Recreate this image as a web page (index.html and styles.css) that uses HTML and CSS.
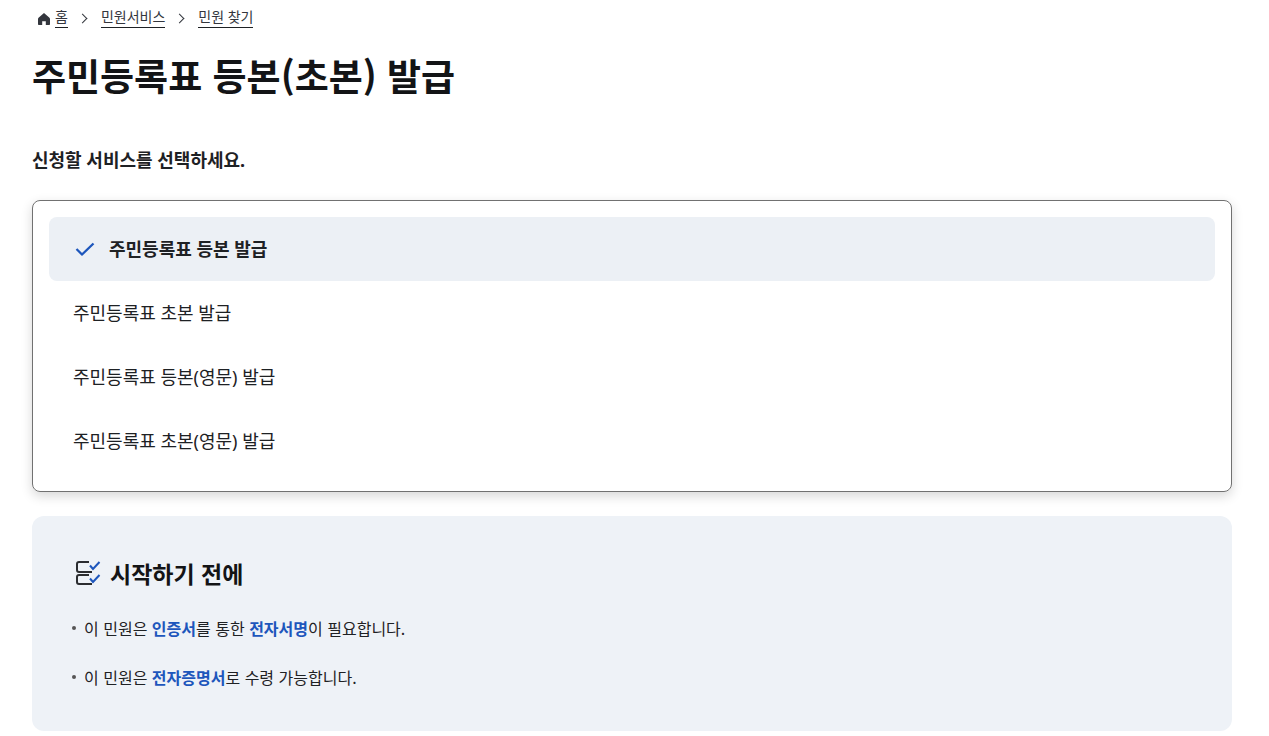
FILE: index.html
```
<!DOCTYPE html>
<html lang="ko">
<head>
	<meta charset="utf-8">
	<meta name="viewport" content="width=device-width, initial-scale=1">
	<title>주민등록표 등본(초본) 발급</title>

	<link rel="stylesheet" href="styles.css">
</head>
<body>

	<main class="container">
		<nav class="breadcrumb" aria-label="현재 위치">
			<svg class="home-icon" viewBox="0 0 14 14" aria-hidden="true">
				<path d="M7 1 L12.2 5.5 Q13 6.2 13 7 V12.2 Q13 13 12.2 13 H8.8 V9.2 H5.2 V13 H1.8 Q1 13 1 12.2 V7 Q1 6.2 1.8 5.5 Z"/>
			</svg>
			<ol>
				<li><a href="#">홈</a></li>
				<li><a href="#">민원서비스</a></li>
				<li><a href="#">민원 찾기</a></li>
			</ol>
		</nav>

		<h1>주민등록표 등본(초본) 발급</h1>

		<h2 class="guide">신청할 서비스를 선택하세요.</h2>

		<ul class="service-list">
			<li>
				<button type="button" class="active" aria-pressed="true">
					<svg class="check-icon" viewBox="0 0 24 24" aria-hidden="true"><path d="M3.500 13 L9 18.500 L20.500 7.500"/></svg>
					주민등록표 등본 발급
				</button>
			</li>
			<li><button type="button">주민등록표 초본 발급</button></li>
			<li><button type="button">주민등록표 등본(영문) 발급</button></li>
			<li><button type="button">주민등록표 초본(영문) 발급</button></li>
		</ul>

		<section class="before">
			<h2>
				<svg class="list-icon" viewBox="0 0 26 26" aria-hidden="true">
					<path class="dark" d="M15 2 H5 Q3 2 3 4 V10 Q3 12 5 12 H18"/>
					<path class="dark" d="M15 15 H5 Q3 15 3 17 V22 Q3 24 5 24 H18"/>
					<path class="blue" d="M16 5.500 L19 9 L25.500 2"/>
					<path class="blue" d="M16 18.500 L19 22 L25.500 15"/>
				</svg>
				시작하기 전에
			</h2>
			<ul>
				<li>이 민원은 <strong>인증서</strong>를 통한 <strong>전자서명</strong>이 필요합니다.</li>
				<li>이 민원은 <strong>전자증명서</strong>로 수령 가능합니다.</li>
			</ul>
		</section>
	</main>

</body>
</html>
```
FILE: styles.css
```
* {
	box-sizing: border-box;
}

body {
	margin: 0;
	font-family: "Noto Sans", "Noto Sans CJK KR", sans-serif;
	color: #1e2124;
	background: #fff;
}

h1, h2, ul, ol {
	margin: 0;
	padding: 0;
}

ul, ol {
	list-style: none;
}

.container {
	padding: 7px 37px 5px 32px;
}

/* breadcrumb */
.breadcrumb {
	display: flex;
	align-items: center;
	gap: 4px;
	padding-left: 5px;
	font-size: 14px;
	line-height: 20px;
}

.breadcrumb ol {
	display: flex;
}

.breadcrumb li {
	display: flex;
	align-items: center;
}

.breadcrumb li + li::before {
	content: "";
	width: 6px;
	height: 6px;
	margin: 2px 15px 0 11px;
	border-top: 1px solid #33363d;
	border-right: 1px solid #33363d;
	transform: rotate(45deg);
}

.breadcrumb a {
	color: #33363d;
	text-decoration: none;
	border-bottom: 1px solid #1e2124;
}

.home-icon {
	width: 14px;
	height: 14px;
	margin-top: 2px;
	fill: #33363d;
}

h1 {
	margin-top: 19px;
	font-family: "Noto Sans CJK KR", sans-serif;
	font-size: 37px;
	line-height: 56px;
	color: #131416;
}

.guide {
	margin-top: 43px;
	font-size: 18px;
	line-height: 28px;
}

/* service select */
.service-list {
	margin-top: 26px;
	padding: 16px 16px 18px;
	border: 1px solid #717171;
	border-radius: 8px;
	box-shadow: 0 4px 12px rgba(0, 0, 0, .16);
}

.service-list button {
	display: flex;
	align-items: center;
	gap: 12px;
	width: 100%;
	height: 64px;
	padding: 0 24px 2px;
	border: 0;
	border-radius: 8px;
	background: none;
	font: inherit;
	font-size: 18px;
	color: inherit;
	text-align: left;
	cursor: pointer;
}

.service-list .active {
	background: #ecf0f5;
	font-weight: bold;
}

.check-icon {
	width: 24px;
	height: 24px;
	fill: none;
	stroke: #1d56bc;
	stroke-width: 2.3;
}

/* notice */
.before {
	margin-top: 24px;
	padding: 40px 40px 42px;
	border-radius: 12px;
	background: #eef2f7;
	font-family: "Noto Sans CJK KR", sans-serif;
}

.before h2 {
	display: flex;
	align-items: center;
	gap: 10px;
	padding-left: 2px;
	font-size: 23px;
	line-height: 34px;
	color: #131416;
}

.list-icon {
	width: 26px;
	height: 26px;
	fill: none;
	stroke-width: 2;
	overflow: visible;
}

.list-icon .dark {
	stroke: #2b2d30;
}

.list-icon .blue {
	stroke: #1d56bc;
}

.before ul {
	display: grid;
	gap: 25px;
	margin-top: 26px;
}

.before li {
	display: flow-root;
	font-size: 16px;
	line-height: 24px;
}

.before li::before {
	content: "";
	float: left;
	width: 4px;
	height: 4px;
	margin: 10px 8px 0 0;
	border-radius: 50%;
	background: #555;
}

.before strong {
	color: #1d56bc;
}
```
